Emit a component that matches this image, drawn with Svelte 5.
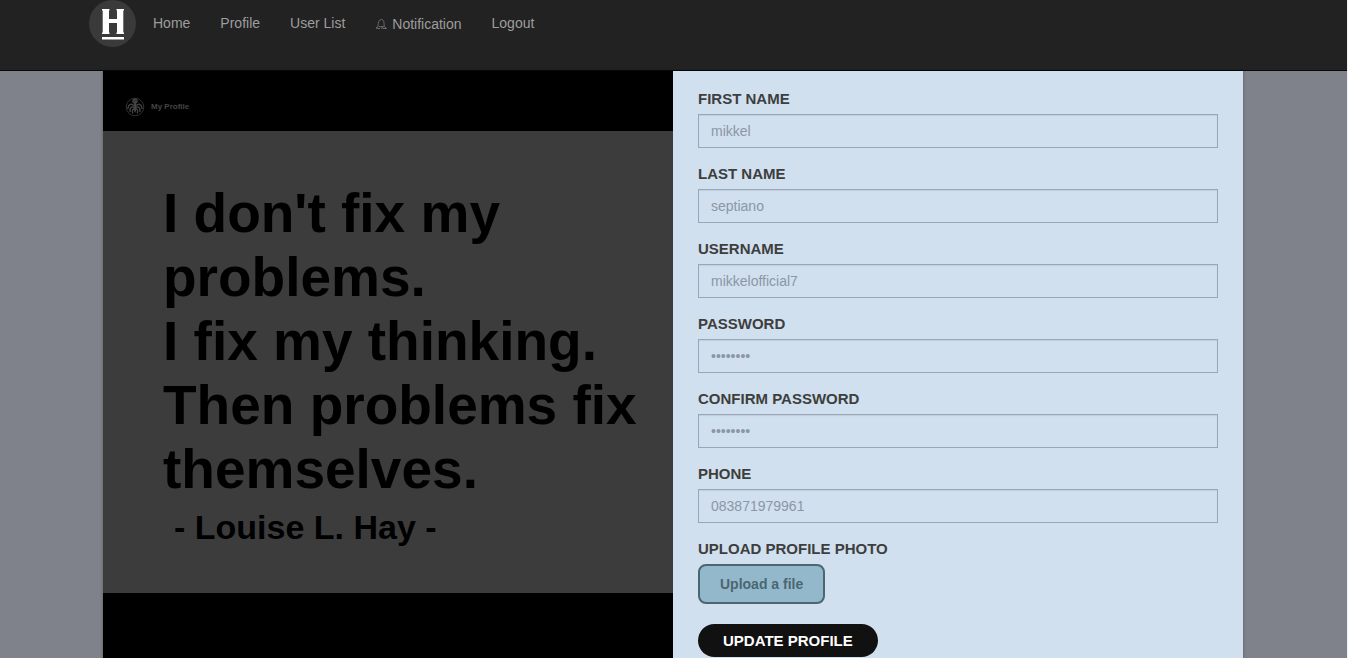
<script>
  const links = ['Home', 'Profile', 'User List', 'Notification', 'Logout'];
  const fields = [
    { id: 'first', label: 'First name', type: 'text', hint: 'mikkel' },
    { id: 'last', label: 'Last name', type: 'text', hint: 'septiano' },
    { id: 'user', label: 'Username', type: 'text', hint: 'mikkelofficial7' },
    { id: 'pass', label: 'Password', type: 'password', hint: '••••••••' },
    { id: 'confirm', label: 'Confirm password', type: 'password', hint: '••••••••' },
    { id: 'phone', label: 'Phone', type: 'text', hint: '083871979961' }
  ];
  const quote = [
    "I don't fix my",
    'problems.',
    'I fix my thinking.',
    'Then problems fix',
    'themselves.'
  ];
</script>

<header>
  <nav>
    <a class="brand" href="#home" aria-label="Start page">
      <svg width="47" height="47" viewBox="0 0 47 47">
        <circle cx="23.500" cy="23.500" r="23.500" fill="#3a3a3a" />
        <path d="M13 9h7.500v1.500h-.5v8.500h8v-8.500h-.5v-1.500h7.500v1.500h-.7v22h.7v1.500h-7.500v-1.500h.5v-9.500h-8v9.500h.5v1.500h-7.500v-1.500h.7v-22h-.7z" fill="#fff" />
        <rect x="13" y="37" width="22" height="2.500" fill="#fff" />
      </svg>
    </a>
    {#each links as link}
      <a class="link" class:with-icon={link === 'Notification'} href="#{link}">
        {#if link === 'Notification'}
          <svg width="12" height="12" viewBox="0 0 12 12" fill="none" stroke="#777" stroke-width="0.900">
            <path d="M3 8.500C3.500 6.500 2.500 2 6.500 1.500C10 2 8.500 6.500 9.500 8.500L11.500 10.500H8M3 8.500L1 10L5 10.700M4 8.700H9M6 10.500L8 9.500" />
          </svg>
        {/if}
        {link}
      </a>
    {/each}
  </nav>
</header>

<div class="page">
  <main>
    <section class="cover">
      <h1>
        <svg width="20" height="20" viewBox="0 0 20 20" fill="none" stroke="#444">
          <circle cx="10" cy="10" r="8.800" stroke-width="0.700" />
          <ellipse cx="10" cy="4" rx="2.800" ry="2.500" fill="#444" stroke="none" />
          <path d="M9 6h2l.7 6L10 16L8.300 12Z" fill="#444" stroke="none" />
          <path d="M8.800 9C7 6 3.500 6.500 2.800 12M8.500 11C7 8.500 5 10 5 15M8.800 12.500C7.500 12 6.800 14 7.800 16.500M11.200 9C13 6 16.500 6.500 17.200 12M11.500 11C13 8.500 15 10 15 15M11.200 12.500C12.500 12 13.200 14 12.200 16.500" stroke-width="1.300" />
          <path d="M8.500 3.800h1M10.500 3.800h1" stroke="#000" stroke-width="0.700" />
        </svg>
        My Profile
      </h1>
      <blockquote>
        {#each quote as line}
          <p>{line}</p>
        {/each}
        <footer>- Louise L. Hay -</footer>
      </blockquote>
    </section>

    <form>
      {#each fields as f}
        <div class="field">
          <label for={f.id}>{f.label}</label>
          <input id={f.id} type={f.type} placeholder={f.hint} />
        </div>
      {/each}
      <div class="upload-field">
        <label for="photo">Upload profile photo</label>
        <button id="photo" class="upload" type="button">Upload a file</button>
      </div>
      <button class="submit" type="submit">Update profile</button>
    </form>
  </main>
</div>

<style>
  :global(body) {
    background: #7f828a;
    font-family: 'Liberation Sans', Arial, sans-serif;
    font-size: 14px;
    line-height: 20px;
  }
  :global(#app) {
    display: flex;
    flex-direction: column;
    min-height: 100vh;
    border-right: 1px solid #eef1f5;
  }
  header {
    padding-right: 1px;
    background: #222;
    border-bottom: 1px solid #080808;
    min-height: 70px;
  }
  .page {
    flex: 1;
    display: flex;
    padding-right: 1px;
  }
  nav,
  main {
    width: 100%;
    max-width: 1140px;
    margin: 0 auto;
  }
  nav {
    display: flex;
    align-items: flex-start;
  }
  .brand {
    display: flex;
    margin-left: -14px;
    padding-right: 2px;
  }
  .link {
    display: flex;
    align-items: center;
    gap: 4px;
    padding: 13px 15px;
    color: #9d9d9d;
    text-decoration: none;
  }
  .with-icon {
    gap: 5px;
    padding-top: 14px;
  }
  main {
    display: grid;
    grid-template-columns: 1fr 1fr;
    background: #d0e0ef;
    box-shadow: 0 0 3px rgba(0, 0, 0, 0.3);
  }
  .cover {
    background: #000;
  }
  h1 {
    display: flex;
    align-items: center;
    gap: 6px;
    margin: 0;
    padding: 26px 22px 14px;
    color: #444;
    font-size: 8px;
    line-height: 20px;
  }
  blockquote {
    margin: 0;
    padding: 50px 24px 40px 60px;
    background: #3c3c3c;
    color: #000;
    font-size: 55px;
    font-weight: bold;
    line-height: 64px;
  }
  p {
    margin: 0;
    white-space: nowrap;
  }
  footer {
    padding-left: 11px;
    font-size: 34px;
    line-height: 52px;
  }
  form {
    padding: 18px 25px 0;
  }
  .field {
    margin-bottom: 16px;
  }
  .upload-field {
    margin-bottom: 20px;
  }
  label {
    display: block;
    margin-bottom: 5px;
    color: #3e3e3e;
    font-size: 15px;
    font-weight: bold;
    line-height: 20px;
    text-transform: uppercase;
  }
  input {
    display: block;
    box-sizing: border-box;
    width: 100%;
    height: 34px;
    padding: 6px 12px;
    border: 1px solid #9aa6b8;
    border-radius: 0;
    background: transparent;
    box-shadow: inset 0 1px 1px rgba(0, 0, 0, 0.08);
    font: inherit;
  }
  input::placeholder {
    color: #8c96a4;
    opacity: 1;
  }
  button {
    display: block;
    font-family: inherit;
    font-weight: bold;
  }
  .upload {
    height: 40px;
    padding: 0 20px;
    border: 2px solid #4c6670;
    border-radius: 8px;
    background: #93b8cb;
    color: #4c6670;
    font-size: 14px;
  }
  .submit {
    height: 33px;
    padding: 0 25px;
    border: 0;
    border-radius: 17px;
    background: #111;
    color: #fff;
    font-size: 15px;
    text-transform: uppercase;
  }
</style>
